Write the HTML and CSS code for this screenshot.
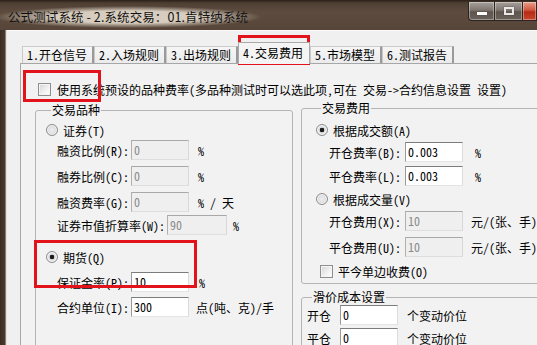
FILE: index.html
```html
<!DOCTYPE html>
<html lang="zh-CN">
<head>
<meta charset="utf-8">
<title>公式测试系统</title>
<link rel="stylesheet" href="styles.css">
</head>
<body>
<div class="window">
  <div class="titlebar">
    <span class="title">公式测试系统 - 2.系统交易：01.肯特纳系统</span>
    <div class="caption-btns">
      <span class="cbtn min"><i></i></span>
      <span class="cbtn max"><i></i></span>
      <span class="cbtn close"></span>
    </div>
  </div>
  <div class="frame">
    <div class="frame-left"></div>
    <div class="client">
      <div class="tabs">
        <span class="tab">1.开仓信号</span>
        <span class="tab">2.入场规则</span>
        <span class="tab">3.出场规则</span>
        <span class="tab sel">4.交易费用</span>
        <span class="tab">5.市场模型</span>
        <span class="tab">6.测试报告</span>
      </div>
      <div class="panel">
        <div class="use-row">
          <span class="check"></span>
          <span>使用系统预设的品种费率(多品种测试时可以选此项,可在 交易-&gt;合约信息设置 设置)</span>
        </div>
        <div class="groups">
          <fieldset class="grp grp-left">
            <legend>交易品种</legend>
            <div class="row radio-row r1"><span class="radio"></span><span>证券(T)</span></div>
            <div class="row field r2"><span>融资比例(R):</span><span class="inp dis">0</span><span class="unit">%</span></div>
            <div class="row field r3"><span>融券比例(C):</span><span class="inp dis">0</span><span class="unit">%</span></div>
            <div class="row field r3"><span>融资费率(G):</span><span class="inp dis">0</span><span class="unit">% / 天</span></div>
            <div class="row field r2"><span>证券市值折算率(W):</span><span class="inp dis wide">90</span><span class="unit u6">%</span></div>
            <div class="row radio-row r5"><span class="radio on"></span><span>期货(Q)</span></div>
            <div class="row field r6"><span>保证金率(P):</span><span class="inp">10</span><span class="unit u10">%</span></div>
            <div class="row field r7"><span>合约单位(I):</span><span class="inp">300</span><span class="unit u7">点(吨、克)/手</span></div>
          </fieldset>
          <div class="right-col">
            <fieldset class="grp grp-fee">
              <legend>交易费用</legend>
              <div class="row radio-row f1"><span class="radio on"></span><span>根据成交额(A)</span></div>
              <div class="row field f2"><span>开仓费率(B):</span><span class="inp">0.003</span><span class="unit u10">%</span></div>
              <div class="row field f3"><span>平仓费率(L):</span><span class="inp">0.003</span><span class="unit u10">%</span></div>
              <div class="row radio-row f4"><span class="radio"></span><span>根据成交量(V)</span></div>
              <div class="row field f5"><span>开仓费用(X):</span><span class="inp dis">10</span><span class="unit u6">元/(张、手)</span></div>
              <div class="row field f6"><span>平仓费用(U):</span><span class="inp dis">10</span><span class="unit u6">元/(张、手)</span></div>
              <div class="row check-row f7"><span class="check"></span><span>平今单边收费(O)</span></div>
            </fieldset>
            <fieldset class="grp grp-slip">
              <legend>滑价成本设置</legend>
              <div class="row field s1"><span>开仓</span><span class="inp">0</span><span class="unit u9">个变动价位</span></div>
              <div class="row field s2"><span>平仓</span><span class="inp">0</span><span class="unit u9">个变动价位</span></div>
            </fieldset>
          </div>
        </div>
      </div>
    </div>
  </div>
  <div class="mark mark-tab"></div>
  <div class="mark mark-check"></div>
  <div class="mark mark-fut"></div>
</div>
</body>
</html>
```

FILE: styles.css
```css
* { box-sizing: border-box; }
html, body { margin: 0; padding: 0; }
body {
  width: 537px;
  height: 345px;
  overflow: hidden;
  background: #3a2d24;
  font-family: "Noto Sans Mono CJK SC", "Noto Sans CJK SC", sans-serif;
  font-size: 12px;
  color: #000;
}
.window {
  position: relative;
  width: 537px;
  height: 345px;
  overflow: hidden;
  display: flex;
  flex-direction: column;
}
.titlebar {
  height: 30px;
  flex: none;
  display: flex;
  align-items: flex-start;
  background: linear-gradient(to bottom, #2a2019 0px, #4e3f33 3px, #5d4c3e 12px, #564538 30px);
  position: relative;
}
.title {
  margin-top: 6px;
  margin-left: -6px;
  padding: 3px 14px 3px 14px;
  font-family: "Noto Sans CJK SC", sans-serif;
  font-size: 12.5px;
  line-height: 16px;
  color: #111;
  letter-spacing: 0.1px;
  background: radial-gradient(ellipse closest-side, rgba(222, 212, 198, 0.95) 55%, rgba(200, 188, 172, 0) 100%);
}
.caption-btns {
  margin-left: auto;
  margin-top: 2px;
  display: flex;
  height: 19px;
}
.cbtn {
  display: flex;
  align-items: center;
  justify-content: center;
  height: 19px;
  border: 1px solid #2a2520;
  border-top: none;
  box-shadow: inset 0 0 0 1px rgba(255, 255, 255, 0.35);
  background: linear-gradient(to bottom, #a7a09a 0%, #7f7670 45%, #5e554e 55%, #6b625b 100%);
}
.cbtn.min { width: 27px; border-radius: 0 0 0 4px; }
.cbtn.max { width: 28px; border-left: none; }
.cbtn.close {
  width: 14px;
  border-left: none;
  background: linear-gradient(to bottom, #e8a08a 0%, #d0573f 45%, #b82a14 55%, #c8452c 100%);
}
.cbtn.min i {
  display: block;
  width: 10px;
  height: 3px;
  margin-top: 5px;
  background: #fff;
  box-shadow: 0 0 1px #333;
}
.cbtn.max i {
  display: block;
  width: 10px;
  height: 8px;
  border: 2px solid #e8e8e8;
  border-top-width: 2px;
  box-shadow: 0 0 1px #333;
}
.frame {
  flex: 1;
  display: flex;
}
.frame-left {
  width: 7px;
  flex: none;
  background: linear-gradient(to right, #3b2c22 0, #4a392d 5px, #c8c0b8 6px, #ffffff 7px);
}
.client {
  flex: 1;
  background: #f0f0f0;
  border-top: 1px solid #fafafa;
  padding-top: 10px;
}
.tabs {
  display: flex;
  align-items: flex-end;
  margin-left: 15px;
  height: 22px;
  position: relative;
  z-index: 1;
}
.tab {
  height: 17px;
  line-height: 16px;
  padding: 0 6px 0 4px;
  width: 72px;
  white-space: nowrap;
  background: linear-gradient(to bottom, #f6f6f6, #ebebeb);
  border: 1px solid #c9c9c9;
  border-right: 2px solid #9a9a9a;
  border-bottom: none;
}
.tab.sel {
  height: 22px;
  margin-bottom: -1px;
  line-height: 20px;
  background: #f4f4f4;
  border-color: #a9a9a9;
  border-right-width: 1px;
}
.panel {
  margin-left: 13px;
  height: 400px;
  border-top: 1px solid #a7a7a7;
  border-left: 1px solid #a7a7a7;
  background: #f2f2f2;
}
.use-row {
  display: flex;
  align-items: center;
  gap: 6px;
  margin-top: 19px;
  padding-left: 17px;
  height: 13px;
  white-space: nowrap;
}
.check {
  width: 13px;
  height: 13px;
  flex: none;
  border: 1px solid #8e8f8f;
  background: linear-gradient(135deg, #d4d4d4 0%, #f2f2f2 60%, #ffffff 100%);
  box-shadow: inset 0 0 0 1px #f4f4f4;
}
.groups {
  display: flex;
  align-items: flex-start;
  margin-left: 14px;
}
.grp {
  margin: 0;
  padding: 0;
  min-width: 0;
  border: 1px solid #b4b4b4;
  border-radius: 3px;
}
.grp legend {
  padding: 0 1px;
  line-height: 14px;
  height: 14px;
}
.grp-left {
  width: 258px;
  height: 260px;
  margin-top: 7px;
  padding-left: 10px;
}
.grp-left legend { margin-left: 5px; }
.right-col {
  margin-left: 8px;
  width: 260px;
  flex: none;
  display: flex;
  flex-direction: column;
  margin-top: 5px;
}
.grp-fee {
  height: 183px;
  padding-left: 14px;
}
.grp-fee legend,
.grp-slip legend { margin-left: 5px; }
.grp-slip {
  margin-top: 6px;
  height: 80px;
  padding-left: 5px;
}
.row {
  display: flex;
  align-items: center;
  white-space: nowrap;
}
.radio-row { height: 14px; gap: 5px; }
.field { height: 20px; padding-left: 11px; gap: 2px; }
.radio {
  width: 12px;
  height: 12px;
  flex: none;
  border-radius: 50%;
  border: 1px solid #8b8c8c;
  background: radial-gradient(circle, #eeeeee 0%, #d9d9d9 70%, #c9c9c9 100%);
  box-shadow: inset 0 0 0 1px #f6f6f6;
}
.radio.on {
  background: radial-gradient(circle, #1b1b1b 0, #1b1b1b 2px, #dcdcdc 2.6px, #e9e9e9 70%, #cfcfcf 100%);
}
.inp {
  display: block;
  width: 58px;
  height: 20px;
  line-height: 17px;
  padding-left: 2px;
  background: #fff;
  border: 1px solid;
  border-color: #7c7c7c #dcdcdc #e4e4e4 #9a9a9a;
}
.inp.dis {
  background: #efefef;
  color: #8a8a8a;
  border-color: #a8a8a8 #d8d8d8 #dedede #b0b0b0;
}
.inp.wide { width: 60px; }
.unit { margin-left: 7px; }
.unit.u6 { margin-left: 4px; }
.unit.u7 { margin-left: 5px; }
.unit.u9 { margin-left: 7px; }
.unit.u10 { margin-left: 8px; }

.r1 { margin-top: 6px; }
.r2 { margin-top: 3px; }
.r3 { margin-top: 6px; }
.r5 { margin-top: 15px; }
.r6 { margin-top: 8px; }
.r7 { margin-top: 5px; }

.grp-fee .field { padding-left: 13px; gap: 4px; }
.f1 { margin-top: 8px; }
.f2 { margin-top: 5px; }
.f3 { margin-top: 4px; }
.f4 { margin-top: 6px; }
.f5 { margin-top: 5px; }
.f6 { margin-top: 6px; }
.check-row { height: 13px; gap: 5px; padding-left: 4px; margin-top: 8px; }

.grp-slip .field { padding-left: 0; gap: 9px; }
.grp-slip .unit { margin-left: 0; }
.s1 { margin-top: 1px; }
.s2 { margin-top: 3px; }

.mark {
  position: absolute;
  border: 3px solid #e3131b;
  pointer-events: none;
}
.mark-tab { left: 238px; top: 35px; width: 72px; height: 30px; }
.mark-check { left: 23px; top: 70px; width: 78px; height: 32px; }
.mark-fut { left: 34px; top: 240px; width: 163px; height: 48px; }
```
